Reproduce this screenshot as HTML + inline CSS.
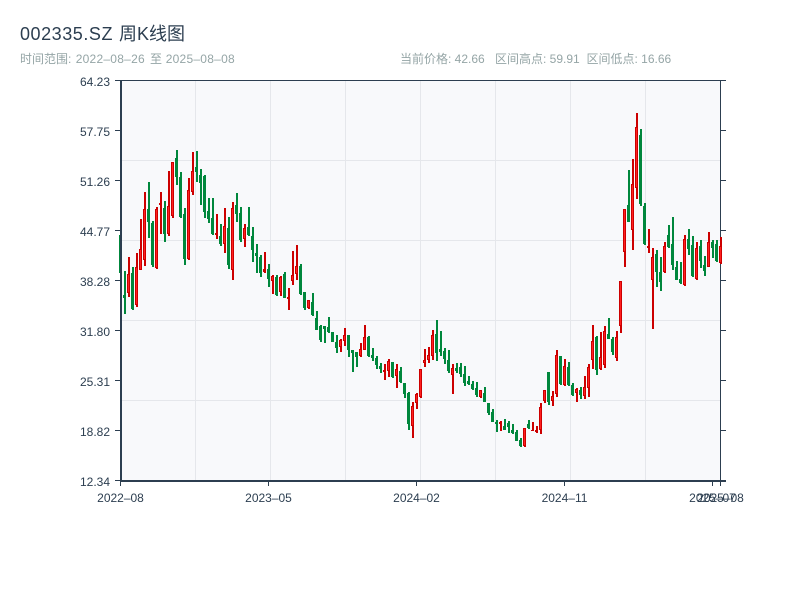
<!DOCTYPE html>
<html><head><meta charset="utf-8"><title>002335.SZ 周K线图</title>
<style>
html,body{margin:0;padding:0;background:#fff;width:800px;height:600px;overflow:hidden}
svg{display:block}
text{font-family:"Liberation Sans","WenQuanYi Zen Hei","Noto Sans CJK SC",sans-serif}
</style></head><body>
<svg width="800" height="600" viewBox="0 0 800 600" xmlns="http://www.w3.org/2000/svg">
<rect width="800" height="600" fill="#fff"/>
<text x="20" y="40" font-size="18" fill="#2c3e50"><tspan letter-spacing=".55">002335.SZ</tspan><tspan x="119">周K线图</tspan></text>
<text y="63" font-size="12" fill="#95a5a6"><tspan x="20">时间范围:</tspan><tspan x="75.7" letter-spacing=".25">2022–08–26</tspan><tspan x="150">至</tspan><tspan x="165.7" letter-spacing=".25">2025–08–08</tspan></text>
<text x="400" y="63" font-size="12" fill="#95a5a6">当前价格: 42.66</text>
<text x="495" y="63" font-size="12" fill="#95a5a6">区间高点: 59.91</text>
<text x="586.5" y="63" font-size="12" fill="#95a5a6">区间低点: 16.66</text>
<rect x="121" y="80" width="600" height="400" fill="#f8f9fb"/>
<g shape-rendering="crispEdges">
<path fill="none" stroke="#e5e7eb" stroke-width="1" d="M121 160.5H720M121 240.5H720M121 320.5H720M121 400.5H720M195.5 81V480M270.5 81V480M345.5 81V480M420.5 81V480M495.5 81V480M570.5 81V480M645.5 81V480"/>
<path fill="none" stroke="#2c3e50" stroke-width="1" d="M120 80.5H726M720.5 80V480M115 80.5H120M115 130.5H120M115 180.5H120M115 230.5H120M115 280.5H120M115 330.5H120M115 380.5H120M115 430.5H120M115 480.5H120M721 80.5H726M721 130.5H726M721 180.5H726M721 230.5H726M721 280.5H726M721 330.5H726M721 380.5H726M721 430.5H726M721 480.5H726M120.5 482V486M268.5 482V486M416.5 482V486M564.5 482V486M712.5 482V486M720.5 482V486"/>
<path fill="none" stroke="#00873c" stroke-width="2" d="M121 235V273M125 271V314M133 267V310M149 182V238M153 221V267M165 201V242M177 150V185M181 172V218M185 208V265M197 151V182M201 169V205M205 175V218M209 198V223M213 198V235M221 224V246M229 217V269M237 193V222M241 207V242M249 207V236M253 227V262M257 244V273M261 255V277M269 264V287M277 275V296M285 272V298M301 264V295M305 292V310M313 293V316M317 311V330M321 325V342M325 326V343M329 317V333M333 332V342M337 335V353M349 335V357M353 350V372M357 352V367M369 336V357M373 348V361M377 356V369M381 363V373M393 362V378M401 367V383M405 383V398M409 392V430M437 320V361M441 331V356M445 348V364M449 350V373M457 363V373M461 363V377M465 366V386M469 376V385M473 381V390M477 382V397M485 387V402M489 403V415M493 409V422M497 420V432M505 419V430M509 421V433M513 424V434M517 430V441M521 438V447M529 420V429M549 372V405M561 356V385M569 362V386M573 383V396M581 387V399M597 336V375M609 318V339M613 337V355M629 170V222M641 129V206M645 203V245M657 250V287M661 257V291M669 225V248M673 217V270M677 261V280M681 262V284M689 229V255M693 236V277M701 240V268M705 256V276M713 240V258M717 240V262"/>
<path fill="none" stroke="#00873c" stroke-width="3" d="M120.5 235V273M124.5 295V298M132.5 273V309M148.5 209V222M152.5 223V265M164.5 208V234M176.5 158V177M180.5 177V217M184.5 214V259M196.5 167V172M200.5 175V183M204.5 176V212M208.5 211V219M212.5 218V234M220.5 236V244M228.5 228V265M236.5 205V214M240.5 213V240M248.5 227V235M252.5 236V250M256.5 253V256M260.5 257V273M268.5 269V279M276.5 277V295M284.5 274V298M300.5 266V294M304.5 292V308M312.5 302V315M316.5 318V330M320.5 326V340M324.5 326V329M328.5 327V332M332.5 332V342M336.5 342V348M348.5 335V350M352.5 350V353M356.5 352V357M368.5 337V356M372.5 355V358M376.5 358V365M380.5 366V369M392.5 362V377M400.5 371V382M404.5 383V394M408.5 393V424M436.5 334V353M440.5 349V352M444.5 351V359M448.5 360V371M456.5 368V371M460.5 367V374M464.5 374V383M468.5 381V384M472.5 384V389M476.5 388V395M484.5 393V402M488.5 403V413M492.5 412V422M496.5 422V424M504.5 426V430M508.5 423V427M512.5 430V433M516.5 432V441M520.5 440V446M528.5 424V428M548.5 372V402M560.5 356V384M568.5 367V385M572.5 385V395M580.5 390V395M596.5 337V370M608.5 334V339M612.5 339V352M628.5 205V222M640.5 135V204M644.5 206V244M656.5 254V272M660.5 272V282M668.5 235V247M672.5 244V265M676.5 267V280M680.5 279V283M688.5 239V249M692.5 245V276M700.5 246V261M704.5 265V271M712.5 242V248M716.5 244V261"/>
<path fill="none" stroke="#cc0000" stroke-width="2" d="M129 257V297M137 253V307M141 219V270M145 192V266M157 207V269M161 192V234M169 171V236M173 162V218M189 178V260M193 152V195M217 214V239M225 208V253M233 202V280M245 224V247M265 252V273M273 275V294M281 276V296M289 288V310M293 251V285M297 245V280M309 300V309M341 339V352M345 328V346M361 343V357M365 325V350M385 364V380M389 359V377M397 364V388M413 402V438M417 393V409M421 369V398M425 349V367M429 347V363M433 330V360M453 364V394M481 390V398M501 421V431M525 428V447M533 422V431M537 426V433M541 403V434M545 390V403M553 391V406M557 350V397M565 359V386M577 388V402M585 376V399M589 364V397M593 325V369M601 332V370M605 326V368M617 331V361M621 281V333M625 209V267M633 159V250M637 113V199M649 229V253M653 248V329M665 242V273M685 235V286M697 242V280M709 232V267M721 237V264"/>
<path fill="none" stroke="#cc0000" stroke-width="3" d="M128.5 274V293M136.5 267V305M140.5 249V270M144.5 209V260M156.5 209V268M160.5 203V205M168.5 206V234M172.5 162V216M188.5 190V259M192.5 171V192M216.5 233V235M224.5 226V244M232.5 208V270M244.5 228V239M264.5 269V272M272.5 276V281M280.5 277V292M288.5 297V299M292.5 275V281M296.5 266V274M308.5 300V308M340.5 340V347M344.5 335V341M360.5 349V356M364.5 337V350M384.5 370V372M388.5 361V371M396.5 369V376M412.5 406V426M416.5 394V403M420.5 369V397M424.5 360V363M428.5 355V360M432.5 335V356M452.5 368V375M480.5 390V397M500.5 422V424M524.5 428V446M532.5 430V431M536.5 430V432M540.5 407V430M544.5 390V401M552.5 396V401M556.5 355V394M564.5 366V385M576.5 389V393M584.5 387V396M588.5 367V388M592.5 341V360M600.5 357V369M604.5 331V365M616.5 337V358M620.5 281V326M624.5 209V252M632.5 184V230M636.5 127V188M648.5 246V248M652.5 257V280M664.5 246V272M684.5 239V285M696.5 248V279M708.5 242V267M720.5 246V263"/>
<path fill="none" stroke="#ff2020" stroke-width="1" d="M128.5 275V292M136.5 268V304M140.5 250V269M144.5 210V259M156.5 210V267M168.5 207V233M172.5 163V215M188.5 191V258M192.5 172V191M224.5 227V243M232.5 209V269M244.5 229V238M272.5 277V280M280.5 278V291M292.5 276V280M296.5 267V273M308.5 301V307M340.5 341V346M344.5 336V340M360.5 350V355M364.5 338V349M388.5 362V370M396.5 370V375M412.5 407V425M416.5 395V402M420.5 370V396M424.5 361V362M428.5 356V359M432.5 336V355M452.5 369V374M480.5 391V396M524.5 429V445M540.5 408V429M544.5 391V400M552.5 397V400M556.5 356V393M564.5 367V384M576.5 390V392M584.5 388V395M588.5 368V387M592.5 342V359M600.5 358V368M604.5 332V364M616.5 338V357M620.5 282V325M624.5 210V251M632.5 185V229M636.5 128V187M652.5 258V279M664.5 247V271M684.5 240V284M696.5 249V278M708.5 243V266M720.5 247V262"/>
<rect x="120" y="80" width="2" height="402" fill="#2c3e50"/>
<rect x="120" y="480" width="606" height="2" fill="#2c3e50"/>
</g>
<g font-size="12" fill="#2c3e50" text-anchor="end">
<text x="110" y="86">64.23</text>
<text x="110" y="136">57.75</text>
<text x="110" y="186">51.26</text>
<text x="110" y="236">44.77</text>
<text x="110" y="286">38.28</text>
<text x="110" y="336">31.80</text>
<text x="110" y="386">25.31</text>
<text x="110" y="436">18.82</text>
<text x="110" y="486">12.34</text>
</g>
<g font-size="12" fill="#2c3e50" text-anchor="middle">
<text x="120.5" y="502">2022–08</text>
<text x="268.5" y="502">2023–05</text>
<text x="416.5" y="502">2024–02</text>
<text x="564.5" y="502">2024–11</text>
<text x="712.5" y="502">2025–07</text>
<text x="720.5" y="502">2025–08</text>
</g>
</svg>
</body></html>
